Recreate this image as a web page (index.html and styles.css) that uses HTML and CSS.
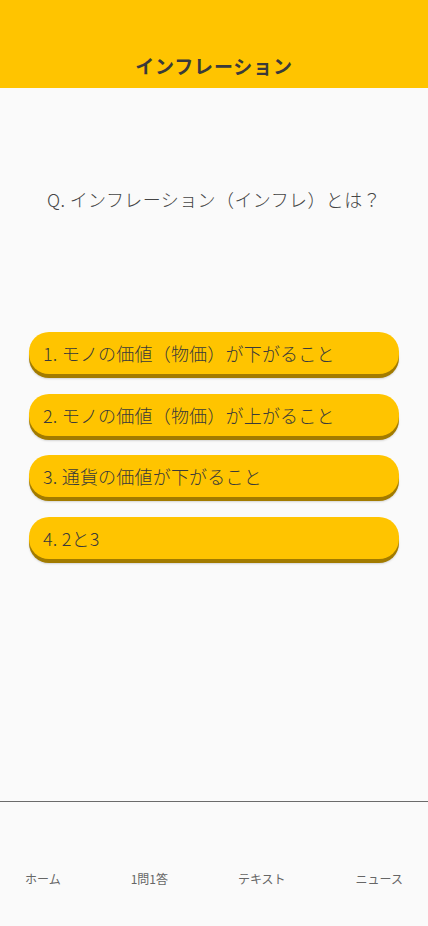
FILE: index.html
```html
<!DOCTYPE html>
<html lang="ja">
<head>
    <meta charset="UTF-8">
    <meta name="viewport" content="width=device-width, initial-scale=1.0">
    <title>インフレーション</title>
    <link rel="stylesheet" href="styles.css">
</head>
<body>
    <div class="app">
        <header class="app-bar">
            <h1>インフレーション</h1>
        </header>

        <main class="quiz">
            <p class="question">Q. インフレーション（インフレ）とは？</p>

            <div class="choices">
                <button class="choice">1. モノの価値（物価）が下がること</button>
                <button class="choice">2. モノの価値（物価）が上がること</button>
                <button class="choice">3. 通貨の価値が下がること</button>
                <button class="choice">4. 2と3</button>
            </div>
        </main>

        <nav class="bottom-nav">
            <a href="#">ホーム</a>
            <a href="#">1問1答</a>
            <a href="#">テキスト</a>
            <a href="#">ニュース</a>
        </nav>
    </div>
</body>
</html>
```

FILE: styles.css
```css
body {
    font-family: "Noto Sans CJK JP", "Noto Sans", sans-serif;
    margin: 0;
    padding: 0;
    background-color: #fafafa;
    color: #333;
}

.app {
    display: flex;
    flex-direction: column;
    height: 926px;
}

.app-bar {
    background-color: #ffc400;
    height: 88px;
    display: flex;
    align-items: flex-end;
    justify-content: center;
}

.app-bar h1 {
    margin: 0 0 9px;
    font-size: 19px;
    font-weight: bold;
    letter-spacing: 0.8px;
    color: #3a3a3a;
}

.quiz {
    flex: 1;
}

.question {
    margin: 98px 0 0;
    text-align: center;
    font-size: 18px;
    font-weight: 300;
    line-height: 26px;
    letter-spacing: 0.4px;
    color: #444;
}

.choices {
    display: flex;
    flex-direction: column;
    gap: 19.5px;
    padding: 0 29px;
    margin-top: 120px;
}

.choice {
    font-family: inherit;
    text-align: left;
    background-color: #ffc400;
    color: #3a3a3a;
    font-size: 18px;
    font-weight: 300;
    letter-spacing: 0.2px;
    height: 42px;
    padding: 0 14px;
    border: none;
    border-radius: 20px;
    box-shadow: 0 4px 0 #a27b00, 0 5px 2px rgba(0, 0, 0, 0.15);
    cursor: pointer;
}

.bottom-nav {
    border-top: 1px solid #6b6b6b;
    height: 124px;
    display: flex;
    justify-content: space-between;
    align-items: center;
    padding: 0 25px;
}

.bottom-nav a {
    font-size: 12px;
    color: #666;
    text-decoration: none;
    margin-top: 28px;
}
```
